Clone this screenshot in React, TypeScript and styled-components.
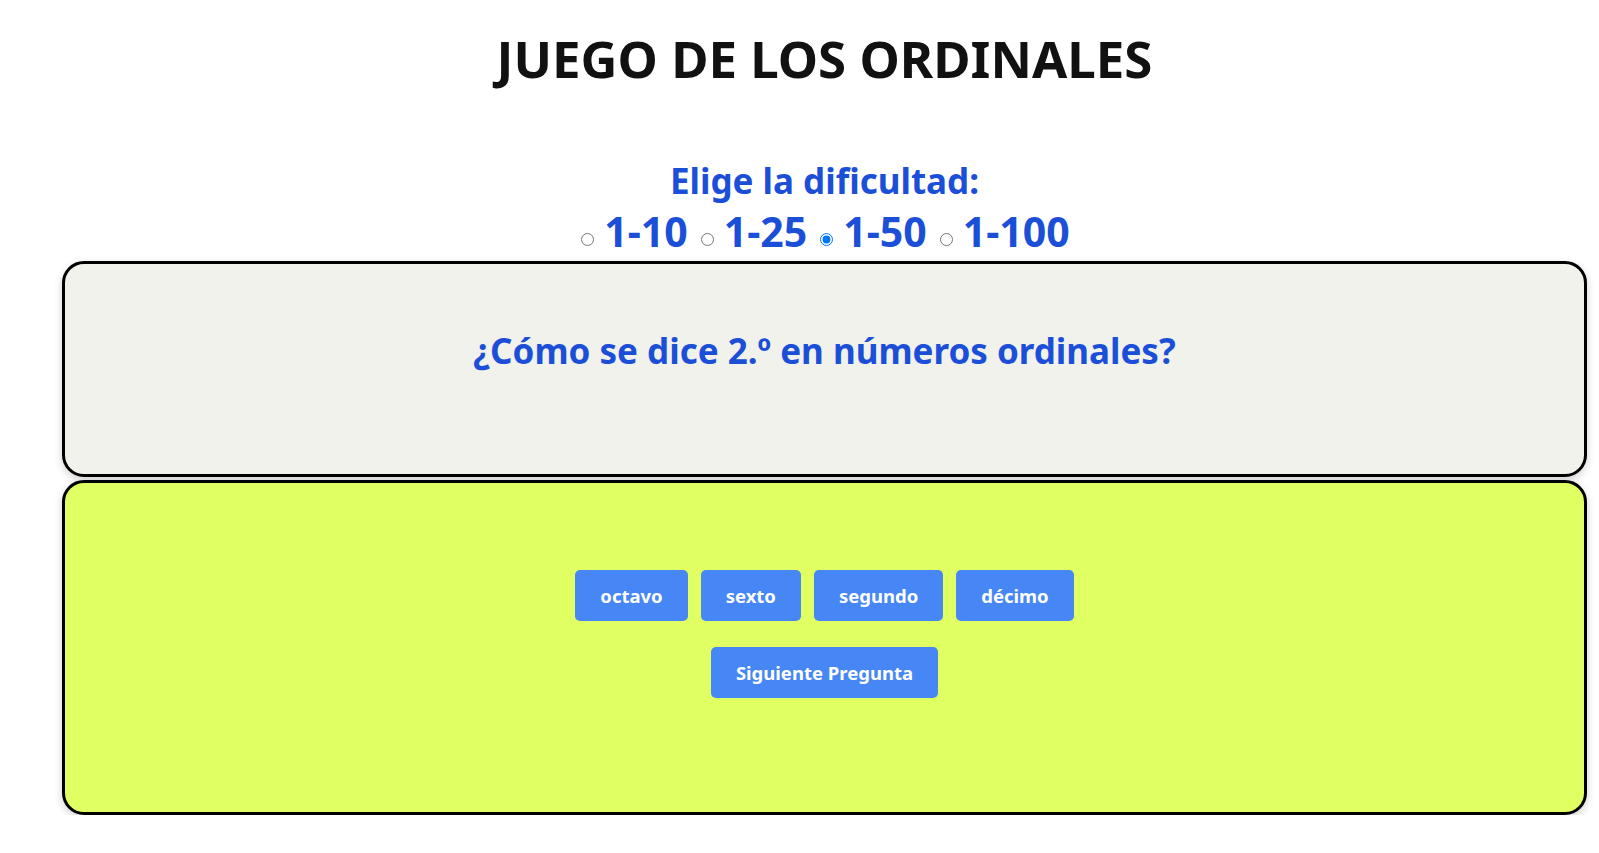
import React, { useState } from "react";
import styled, { createGlobalStyle } from "styled-components";

const Global = createGlobalStyle`
  html, body { margin: 0; padding: 0; background: #ffffff; }
  body { font-family: "Noto Sans", "Open Sans", sans-serif; }
`;

const Page = styled.div`
  padding: 0 12px 0 62px;
  display: flex;
  flex-direction: column;
  align-items: stretch;
`;

const Title = styled.h1`
  margin: 25px 0 0;
  text-align: center;
  font-size: 51px;
  font-weight: 700;
  line-height: 66px;
  color: #111111;
`;

const DifficultyBlock = styled.div`
  margin-top: 67px;
  text-align: center;
  color: #1b4fd8;
  font-weight: 700;
`;

const DifficultyLabel = styled.div`
  font-size: 35px;
  line-height: 46px;
`;

const RadioRow = styled.div`
  margin-top: 2px;
  display: flex;
  justify-content: center;
  align-items: baseline;
  font-size: 41px;
  line-height: 50px;
`;

const Option = styled.label`
  display: inline-flex;
  align-items: baseline;
  gap: 10px;
  margin-right: 11px;
  cursor: pointer;
  &:last-child { margin-right: 0; }
`;

const Radio = styled.input`
  margin: 0 0 0 2px;
  width: 13px;
  height: 13px;
  transform: translateY(-1px);
`;

const Card = styled.div<{ $bg: string; $h: number }>`
  box-sizing: border-box;
  height: ${(p) => p.$h}px;
  background: ${(p) => p.$bg};
  border: 3px solid #000000;
  border-radius: 22px;
  box-shadow: 0 3px 8px rgba(0, 0, 0, 0.18);
`;

const QuestionCard = styled(Card)`
  margin-top: 5px;
  padding-top: 63px;
  text-align: center;
`;

const Question = styled.h2`
  margin: 0;
  font-size: 35px;
  font-weight: 700;
  line-height: 48px;
  color: #1b4fd8;
`;

const AnswerCard = styled(Card)`
  margin-top: 3px;
  padding-top: 87px;
  display: flex;
  flex-direction: column;
  align-items: center;
  gap: 26px;
`;

const ButtonRow = styled.div`
  display: flex;
  justify-content: center;
  gap: 13px;
`;

const Button = styled.button`
  height: 51px;
  padding: 0 25px;
  border: none;
  border-radius: 5px;
  background: #4686f5;
  color: #ffffff;
  font-family: "Noto Sans", "Open Sans", sans-serif;
  font-size: 18.5px;
  font-weight: 700;
  cursor: pointer;
`;

const options = ["1-10", "1-25", "1-50", "1-100"];
const answers = ["octavo", "sexto", "segundo", "décimo"];

export default function App() {
  const [level, setLevel] = useState("1-50");
  return (
    <>
      <Global />
      <Page>
        <Title>JUEGO DE LOS ORDINALES</Title>
        <DifficultyBlock>
          <DifficultyLabel>Elige la dificultad:</DifficultyLabel>
          <RadioRow>
            {options.map((o) => (
              <Option key={o}>
                <Radio
                  type="radio"
                  name="level"
                  checked={level === o}
                  onChange={() => setLevel(o)}
                />
                {o}
              </Option>
            ))}
          </RadioRow>
        </DifficultyBlock>
        <QuestionCard $bg="#f0f2eb" $h={216}>
          <Question>¿Cómo se dice 2.º en números ordinales?</Question>
        </QuestionCard>
        <AnswerCard $bg="#dfff62" $h={335}>
          <ButtonRow>
            {answers.map((a) => (
              <Button key={a}>{a}</Button>
            ))}
          </ButtonRow>
          <Button>Siguiente Pregunta</Button>
        </AnswerCard>
      </Page>
    </>
  );
}
